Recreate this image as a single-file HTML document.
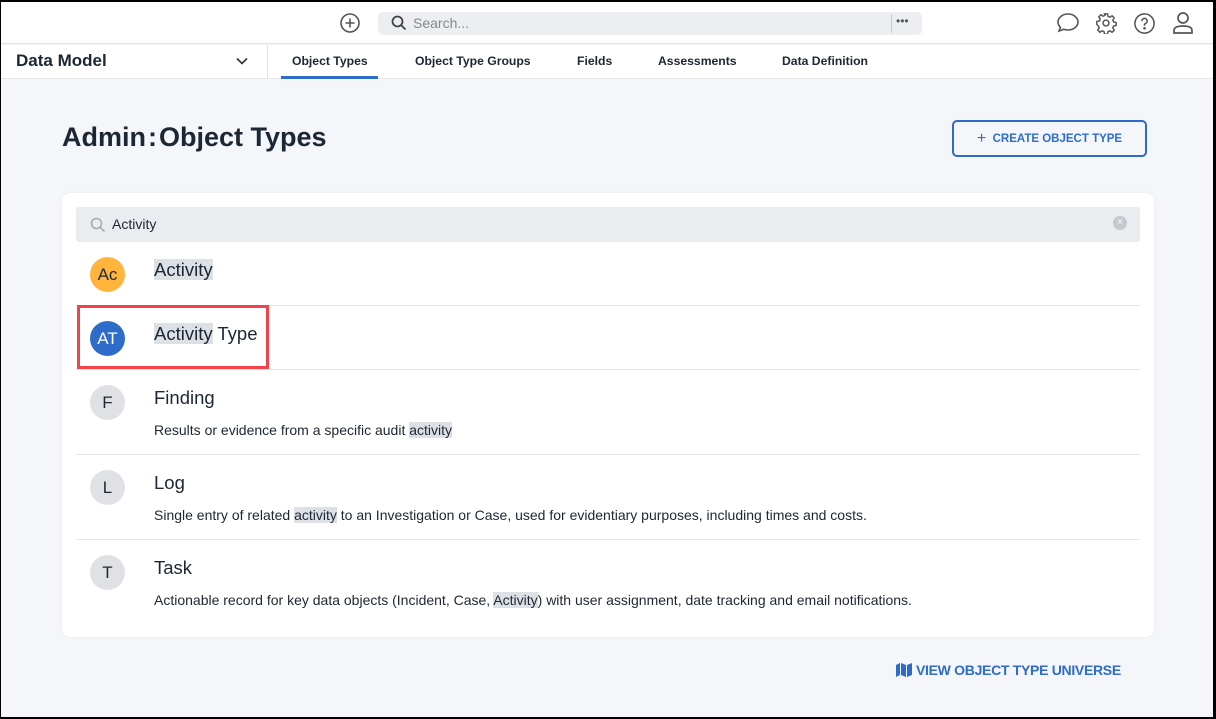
<!DOCTYPE html>
<html><head><meta charset="utf-8"><style>
*{box-sizing:border-box;margin:0;padding:0}
body{width:1216px;height:719px;background:#000;font-family:"Liberation Sans",sans-serif;color:#1c2733;position:relative;overflow:hidden}
#pg{position:absolute;left:1px;top:2px;width:1212px;height:715px;background:#f5f6fa;overflow:hidden}
.a{position:absolute}
.top{left:0;top:0;width:1212px;height:42px;background:#fff;border-bottom:1px solid #dfe2e6}
.nav{left:0;top:43px;width:1212px;height:34px;background:#fff;border-bottom:1px solid #e6e8ec}
.tab{position:absolute;top:52px;font-size:12.2px;font-weight:bold;color:#1c2733}
.card{left:61px;top:191px;width:1092px;height:444px;background:#fff;border-radius:8px;box-shadow:0 0 2px rgba(0,0,0,.08)}
.row{position:absolute;left:14px;width:1064px;border-bottom:1px solid #e3e5e8}
.av{position:absolute;left:28px;width:35px;height:35px;border-radius:50%;text-align:center;line-height:35px;font-size:17px}
.t{position:absolute;left:92px;font-size:18.5px;color:#1c2733}
.d{position:absolute;left:92px;font-size:14px;color:#1c2733}
.h{background:#dde0e5}
</style></head><body><div id="pg">
<div class="a top"></div>
<svg class="a" style="left:338px;top:10px" width="22" height="22" viewBox="0 0 22 22" fill="none" stroke="#555" stroke-width="1.6"><circle cx="11" cy="11" r="9"/><path d="M11 6.5v9M6.5 11h9"/></svg>
<div class="a" style="left:377px;top:10px;width:544px;height:23px;background:#eceef1;border-radius:5px"></div>
<svg class="a" style="left:390px;top:13px" width="16" height="16" viewBox="0 0 16 16" fill="none" stroke="#444" stroke-width="1.8"><circle cx="6.5" cy="6.5" r="5"/><path d="M10 10l4.5 4.5"/></svg>
<div class="a" style="left:412px;top:13px;font-size:14px;color:#888">Search...</div>
<div class="a" style="left:890px;top:12px;width:1px;height:19px;background:#c8ccd2"></div>
<div class="a" style="left:895px;top:12px;font-size:12px;color:#555;letter-spacing:0px">•••</div>
<svg class="a" style="left:1055px;top:10px" width="24" height="22" viewBox="0 0 24 22" fill="none" stroke="#555" stroke-width="1.6"><path d="M12 2c5.5 0 10 3.6 10 8s-4.5 8-10 8c-1.5 0-3-.3-4.2-.8L3 19l1.5-3.6C3 14 2 12.1 2 10c0-4.4 4.5-8 10-8z"/></svg>
<svg class="a" style="left:1094px;top:10px" width="22" height="22" viewBox="0 0 24 24" fill="none" stroke="#555" stroke-width="1.6"><circle cx="12" cy="12" r="3.2"/><path d="M10.3 2h3.4l.5 2.8 2 .9 2.4-1.6 2.4 2.4-1.6 2.4.9 2 2.7.5v3.4l-2.7.5-.9 2 1.6 2.4-2.4 2.4-2.4-1.6-2 .9-.5 2.8h-3.4l-.5-2.8-2-.9-2.4 1.6-2.4-2.4 1.6-2.4-.9-2L2 13.7v-3.4l2.8-.5.9-2-1.6-2.4 2.4-2.4 2.4 1.6 2-.9z"/></svg>
<svg class="a" style="left:1132px;top:10px" width="23" height="23" viewBox="0 0 24 24" fill="none" stroke="#555" stroke-width="1.6"><circle cx="12" cy="12" r="10"/><path d="M9.2 9.5a2.8 2.8 0 1 1 3.8 2.6c-.7.3-1 .8-1 1.6v.6"/><circle cx="12" cy="17" r=".6" fill="#555"/></svg>
<svg class="a" style="left:1171px;top:9px" width="22" height="24" viewBox="0 0 22 24" fill="none" stroke="#555" stroke-width="1.7"><circle cx="11" cy="7" r="5"/><path d="M2 22v-2.5C2 16.5 5 15 11 15s9 1.5 9 4.5V22z"/></svg>
<div class="a nav"></div>
<div class="a" style="left:15px;top:49px;font-size:17px;font-weight:bold;color:#1c2733">Data Model</div>
<svg class="a" style="left:234px;top:54px" width="14" height="10" viewBox="0 0 14 10" fill="none" stroke="#333" stroke-width="1.6"><path d="M2 2.5l5 5 5-5"/></svg>
<div class="a" style="left:266px;top:43px;width:1px;height:34px;background:#e0e2e6"></div>
<div class="tab" style="left:291px">Object Types</div>
<div class="a" style="left:280px;top:74px;width:97px;height:3px;background:#2d6cc9"></div>
<div class="tab" style="left:414px">Object Type Groups</div>
<div class="tab" style="left:576px">Fields</div>
<div class="tab" style="left:657px">Assessments</div>
<div class="tab" style="left:781px">Data Definition</div>
<div class="a" style="left:61px;top:120px;font-size:27px;font-weight:bold;color:#1c2733">Admin<span style="margin:0 2px">:</span>Object Types</div>
<div class="a" style="left:951px;top:118px;width:195px;height:37px;border:2px solid #2d6cc9;border-radius:5px;color:#2d6cc9;font-size:11.5px;font-weight:bold;line-height:33px;text-align:center"><span style="font-size:16px;font-weight:normal;vertical-align:-1px">+</span>&nbsp; CREATE OBJECT TYPE</div>
<div class="a card">
<div class="a" style="left:14px;top:14px;width:1064px;height:35px;background:#eaecf0;border-radius:3px"></div>
<svg class="a" style="left:28px;top:24px" width="16" height="16" viewBox="0 0 16 16" fill="none" stroke="#aaa" stroke-width="1.6"><circle cx="6.5" cy="6.5" r="5"/><path d="M10 10l4.5 4.5"/></svg>
<div class="a" style="left:50px;top:23px;font-size:14px">Activity</div>
<div class="a" style="left:1051px;top:23px;width:14px;height:14px;border-radius:50%;background:#c5c9cf;color:#fff;font-size:10px;line-height:14px;text-align:center">×</div>
<div class="row" style="top:49px;height:64px"></div>
<div class="av" style="top:64px;background:#ffb53d">Ac</div>
<div class="t" style="top:66px"><span class="h">Activity</span></div>
<div class="row" style="top:113px;height:64px"></div>
<div class="av" style="top:128px;background:#2d6cc9;color:#fff">AT</div>
<div class="t" style="top:130px"><span class="h">Activity</span> Type</div>
<div class="a" style="left:15px;top:112px;width:192px;height:64px;border:3px solid #f2434b"></div>
<div class="row" style="top:177px;height:85px"></div>
<div class="av" style="top:192px;background:#dfe1e4">F</div>
<div class="t" style="top:194px">Finding</div>
<div class="d" style="top:229px">Results or evidence from a specific audit <span class="h">activity</span></div>
<div class="row" style="top:262px;height:85px"></div>
<div class="av" style="top:277px;background:#dfe1e4">L</div>
<div class="t" style="top:279px">Log</div>
<div class="d" style="top:314px">Single entry of related <span class="h">activity</span> to an Investigation or Case, used for evidentiary purposes, including times and costs.</div>
<div class="av" style="top:362px;background:#dfe1e4">T</div>
<div class="t" style="top:364px">Task</div>
<div class="d" style="top:399px">Actionable record for key data objects (Incident, Case, <span class="h">Activity</span>) with user assignment, date tracking and email notifications.</div>
</div>
<svg class="a" style="left:895px;top:661px" width="16" height="14" viewBox="0 0 16 14" fill="#2d6cc9"><path d="M0 2l4-2v12l-4 2zM5 0l5 2v12l-5-2zM11 2l5-2v12l-5 2z"/></svg>
<div class="a" style="left:915px;top:660px;font-size:14px;font-weight:bold;color:#2d6cc9;letter-spacing:-0.3px">VIEW OBJECT TYPE UNIVERSE</div>
</div></body></html>
